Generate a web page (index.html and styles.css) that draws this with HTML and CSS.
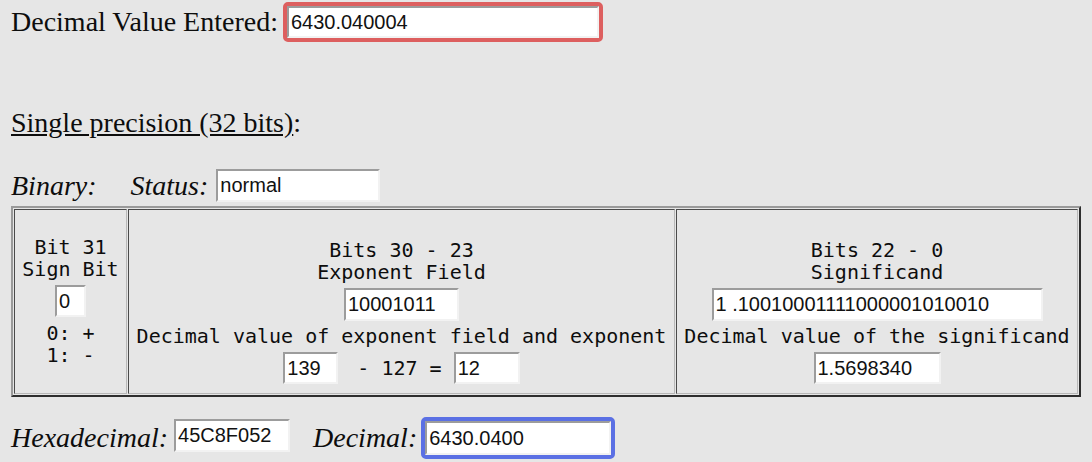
FILE: index.html
```html
<!DOCTYPE html>
<html>
<head>
<meta charset="utf-8">
<link rel="stylesheet" href="styles.css">
</head>
<body>
<div class="page">
  <div class="row top">
    <span class="label">Decimal Value Entered:</span>
    <span class="focus red"><input class="field entered" value="6430.040004"></span>
  </div>
  <div class="heading"><u>Single precision (32 bits)</u>:</div>
  <div class="row status-row">
    <em>Binary:</em>
    <em class="status-label">Status:</em>
    <input class="field status" value="normal">
  </div>
  <table class="bits">
    <tr>
      <td>
        <div class="cell sign">
          <div class="ln">Bit 31</div>
          <div class="ln">Sign Bit</div>
          <input class="field bit" value="0">
          <div class="ln gap">0: +</div>
          <div class="ln">1: -</div>
        </div>
      </td>
      <td>
        <div class="cell exp">
          <div class="ln">Bits 30 - 23</div>
          <div class="ln">Exponent Field</div>
          <input class="field expbits" value="10001011">
          <div class="ln gap">Decimal value of exponent field and exponent</div>
          <div class="calc">
            <input class="field e139" value="139">
            <span class="minus">- 127 =</span>
            <input class="field e12" value="12">
          </div>
        </div>
      </td>
      <td>
        <div class="cell sig">
          <div class="ln">Bits 22 - 0</div>
          <div class="ln">Significand</div>
          <input class="field sigbits" value="1 .10010001111000001010010">
          <div class="ln gap">Decimal value of the significand</div>
          <input class="field sigdec" value="1.5698340">
        </div>
      </td>
    </tr>
  </table>
  <div class="row hex-row">
    <em>Hexadecimal:</em>
    <input class="field hex" value="45C8F052">
    <em class="dec-label">Decimal:</em>
    <span class="focus blue"><input class="field decimal" value="6430.0400"></span>
  </div>
</div>
</body>
</html>
```
FILE: styles.css
```css
body {
  margin: 0;
  background: #e6e6e6;
  color: #0d0d0d;
  font-family: "Liberation Serif", "Times New Roman", serif;
  font-size: 28px;
}
.page {
  padding: 2px 11px 0;
}
.row {
  display: flex;
  align-items: center;
}
.top {
  height: 40px;
  gap: 5px;
}
.field {
  font-family: "Liberation Sans", Arial, sans-serif;
  font-size: 20px;
  color: #111;
  background: #fff;
  height: 32px;
  box-sizing: border-box;
  margin: 0;
  padding: 0 2px;
  border: 2px solid;
  border-color: #9c9c9c #f2f2f2 #f2f2f2 #9c9c9c;
  outline: none;
}
.focus {
  display: inline-flex;
  border: 4px solid;
  border-radius: 5px;
}
.red {
  border-color: #dd5f5f;
}
.blue {
  border-color: #5b70e4;
}
.entered {
  width: 312px;
}
.heading {
  margin-top: 65px;
  line-height: 31px;
}
.status-row {
  margin-top: 31px;
  height: 33px;
}
.status-label {
  margin-left: 34px;
  margin-right: 8px;
}
.status {
  width: 164px;
  height: 33px;
}
.bits {
  margin-top: 4px;
  border-collapse: separate;
  border-spacing: 1px;
  border: 2px solid;
  border-color: #9a9a9a #2e2e2e #2e2e2e #9a9a9a;
  font-family: "DejaVu Sans Mono", monospace;
  font-size: 20px;
  color: #0d0d0d;
}
.bits td {
  padding: 0;
  border: 1px solid;
  border-color: #4a4a4a #b8b8b8 #b8b8b8 #4a4a4a;
  vertical-align: top;
}
.cell {
  height: 183px;
  box-sizing: border-box;
  display: flex;
  flex-direction: column;
  align-items: center;
}
.cell.sign {
  width: 111px;
  padding-top: 26px;
}
.cell.exp {
  width: 545px;
  padding-top: 29px;
}
.cell.sig {
  width: 400px;
  padding-top: 29px;
}
.ln {
  line-height: 22px;
  height: 22px;
  white-space: pre;
}
.cell .field {
  margin-top: 5px;
}
.gap {
  margin-top: 4px;
}
.cell.sign .gap {
  margin-top: 5px;
}
.bit {
  width: 31px;
}
.expbits {
  width: 115px;
  height: 33px;
}
.sigbits {
  width: 331px;
  height: 33px;
}
.sigdec {
  width: 127px;
}
.calc {
  display: flex;
  align-items: center;
  margin-top: 5px;
}
.calc .field {
  margin-top: 0;
}
.e139 {
  width: 55px;
}
.e12 {
  width: 66px;
}
.minus {
  margin: 0 12px 0 19px;
  white-space: pre;
}
.hex-row {
  margin-top: 20px;
  align-items: flex-start;
}
.hex-row em {
  line-height: 42px;
}
.hex {
  width: 116px;
  height: 33px;
  margin-top: 2px;
  margin-left: 6px;
}
.dec-label {
  margin-left: 23px;
  margin-right: 4px;
}
.decimal {
  width: 186px;
  height: 34px;
}
```
